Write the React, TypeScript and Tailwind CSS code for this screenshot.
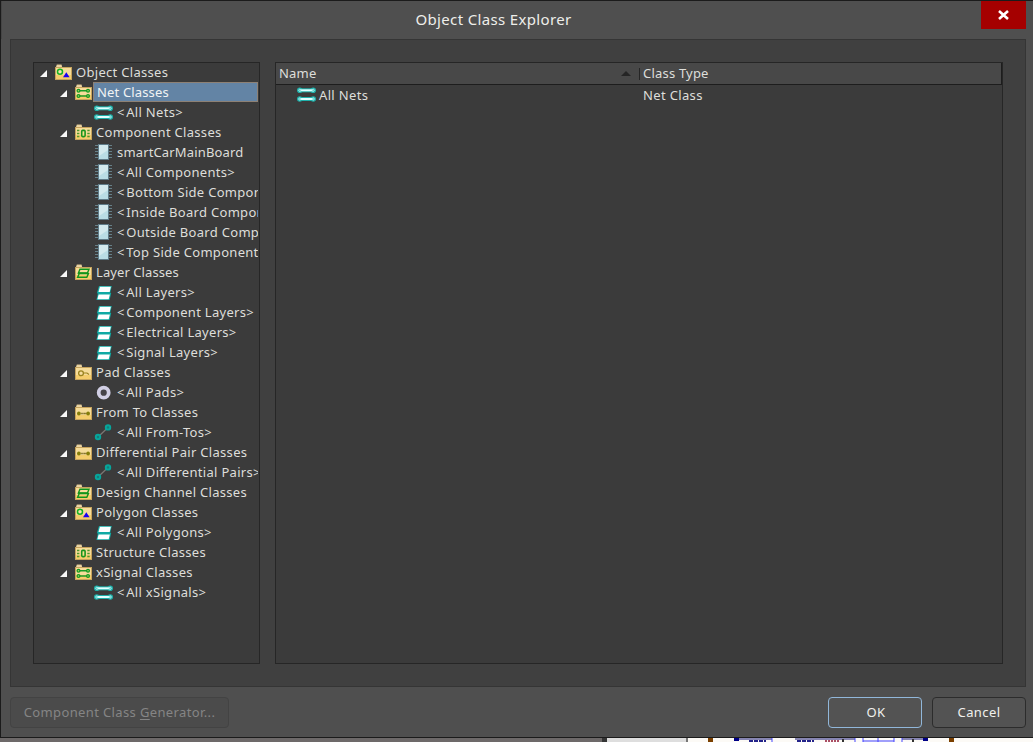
import type { ReactNode } from 'react';

type IconName = 'polygonFolder' | 'netFolder' | 'componentFolder' | 'layerFolder' | 'padFolder' | 'fromToFolder' | 'net' | 'component' | 'layer' | 'pad' | 'fromTo';

function Folder({ children }: { children: ReactNode }) {
  return (
    <>
      <path d="M1 15.5V3.5H2L2.8 0.5H7.5L8.3 3.5H17V15.5Z" fill="#d9c18d" />
      <path d="M2 3.5L3 1.2H7.3L8 3.5Z" fill="#ecd6a6" />
      <rect x="1.5" y="3.5" width="16" height="12" fill="#f6dc9a" stroke="#c6a35c" />
      <path d="M2 11H17V15H2Z" fill="#f5cd6c" />
      {children}
    </>
  );
}

function NetLine({ y }: { y: number }) {
  return (
    <>
      <rect x="2" y={y - 2} width="15" height="4" fill="#1fb0aa" />
      <circle cx="2.8" cy={y} r="2.8" fill="#1fb0aa" />
      <circle cx="16.2" cy={y} r="2.8" fill="#1fb0aa" />
      <path d={`M3 ${y}H16`} stroke="#e2ffff" strokeWidth="2" />
      <circle cx="2.8" cy={y} r="1.1" fill="#3bbdb8" stroke="#b4f2f0" strokeWidth="0.9" />
      <circle cx="16.2" cy={y} r="1.1" fill="#3bbdb8" stroke="#b4f2f0" strokeWidth="0.9" />
    </>
  );
}

function Icon({ name }: { name: IconName }) {
  return (
    <svg className="h-[18px] w-[19px] shrink-0" viewBox="0 0 19 18">
      {name === 'polygonFolder' && (
        <Folder>
          <circle cx="6" cy="7.7" r="2.5" fill="#f6e4ac" stroke="#16b321" strokeWidth="1.5" />
          <path d="M9 13.3L12.3 8.3L15.6 13.3Z" fill="#1b00f2" />
        </Folder>
      )}
      {name === 'netFolder' && (
        <Folder>
          <path d="M5 6.7H14M5 12H14" stroke="#1c9c27" strokeWidth="1.6" />
          <g fill="#b9cf60" stroke="#149b21" strokeWidth="1.3">
            <circle cx="4.5" cy="6.7" r="1.4" /><circle cx="14" cy="6.7" r="1.4" />
            <circle cx="4.5" cy="12" r="1.4" /><circle cx="14" cy="12" r="1.4" />
          </g>
        </Folder>
      )}
      {name === 'componentFolder' && (
        <Folder>
          <rect x="7.7" y="6.4" width="3.4" height="6.2" rx="1" fill="#f4de8a" stroke="#18951e" strokeWidth="1.6" />
          <path d="M3 6.5H5.4M3 9.5H5.4M3 12.5H5.4M13.3 6.5H15.7M13.3 9.5H15.7M13.3 12.5H15.7" stroke="#50972b" strokeWidth="1.3" />
        </Folder>
      )}
      {name === 'layerFolder' && (
        <Folder>
          <path d="M6 5.3H15L13.4 9H4.4ZM5.2 9.6H14.4L12.8 13.2H3.6Z" fill="none" stroke="#11951b" strokeWidth="1.4" />
          <path d="M4.4 9.3H14.5" stroke="#11951b" strokeWidth="1.5" />
        </Folder>
      )}
      {name === 'padFolder' && (
        <Folder>
          <circle cx="7" cy="9.3" r="2.4" fill="#f6dda0" stroke="#9b831f" strokeWidth="1.3" />
          <path d="M9.7 9H13L15 10.4" fill="none" stroke="#9b831f" strokeWidth="1.2" />
        </Folder>
      )}
      {name === 'fromToFolder' && (
        <Folder>
          <circle cx="4.9" cy="9.5" r="1.9" fill="#857e09" />
          <circle cx="14.1" cy="9.5" r="1.9" fill="#857e09" />
          <path d="M7.4 9.5H8.6M9.5 9.5H10.7M11.4 9.5H12.2" stroke="#554700" strokeWidth="1.4" />
        </Folder>
      )}
      {name === 'net' && <><NetLine y={4.3} /><NetLine y={13} /></>}
      {name === 'component' && (
        <>
          <path d="M1 1.5H18M1 4.5H18M1 7.5H18M1 10.5H18M1 13.5H18" stroke="#668088" />
          <rect x="4.5" y="0.5" width="10" height="15" fill="#b9dde5" stroke="#5f7c89" />
          <path d="M5 1H14V6L5 12Z" fill="#d3eaee" />
        </>
      )}
      {name === 'layer' && (
        <>
          <path d="M5 2H17.8L16.2 8.8L17.2 9L15.6 16H2.4L3.9 9.5L2.8 9.2Z" fill="#10aaa4" />
          <path d="M5.9 2.7H16.9L15.7 8H4.5Z" fill="white" />
          <path d="M4.6 10.5H15.9L14.7 15.3H3.4Z" fill="white" />
        </>
      )}
      {name === 'pad' && <circle cx="9.7" cy="8.7" r="5" fill="#454348" stroke="#d1cfe4" strokeWidth="3.8" />}
      {name === 'fromTo' && (
        <>
          <path d="M4 13L14 3.5" stroke="#7b7976" strokeWidth="1.2" />
          <circle cx="4" cy="13" r="2.2" fill="#177b76" stroke="#06a59b" strokeWidth="2" />
          <circle cx="14" cy="3.4" r="2.2" fill="#177b76" stroke="#06a59b" strokeWidth="2" />
        </>
      )}
    </svg>
  );
}

type Item = { level: 0 | 1 | 2; icon: IconName; label: string; open?: boolean; selected?: boolean; tracking?: string };

const items: Item[] = [
  { level: 0, icon: 'polygonFolder', label: 'Object Classes', open: true },
  { level: 1, icon: 'netFolder', label: 'Net Classes', open: true, selected: true, tracking: 'tracking-[0.15px]' },
  { level: 2, icon: 'net', label: '<All Nets>' },
  { level: 1, icon: 'componentFolder', label: 'Component Classes', open: true },
  { level: 2, icon: 'component', label: 'smartCarMainBoard', tracking: 'tracking-[0.15px]' },
  { level: 2, icon: 'component', label: '<All Components>' },
  { level: 2, icon: 'component', label: '<Bottom Side Components>' },
  { level: 2, icon: 'component', label: '<Inside Board Components>' },
  { level: 2, icon: 'component', label: '<Outside Board Components>' },
  { level: 2, icon: 'component', label: '<Top Side Components>' },
  { level: 1, icon: 'layerFolder', label: 'Layer Classes', open: true, tracking: 'tracking-[0.08px]' },
  { level: 2, icon: 'layer', label: '<All Layers>' },
  { level: 2, icon: 'layer', label: '<Component Layers>' },
  { level: 2, icon: 'layer', label: '<Electrical Layers>' },
  { level: 2, icon: 'layer', label: '<Signal Layers>' },
  { level: 1, icon: 'padFolder', label: 'Pad Classes', open: true },
  { level: 2, icon: 'pad', label: '<All Pads>' },
  { level: 1, icon: 'fromToFolder', label: 'From To Classes', open: true },
  { level: 2, icon: 'fromTo', label: '<All From-Tos>' },
  { level: 1, icon: 'fromToFolder', label: 'Differential Pair Classes', open: true },
  { level: 2, icon: 'fromTo', label: '<All Differential Pairs>' },
  { level: 1, icon: 'layerFolder', label: 'Design Channel Classes' },
  { level: 1, icon: 'polygonFolder', label: 'Polygon Classes', open: true },
  { level: 2, icon: 'layer', label: '<All Polygons>' },
  { level: 1, icon: 'componentFolder', label: 'Structure Classes' },
  { level: 1, icon: 'netFolder', label: 'xSignal Classes', open: true },
  { level: 2, icon: 'net', label: '<All xSignals>' },
];

const indents = ['pl-[6px]', 'pl-[26px]', 'pl-[46px]'];

function Label({ text }: { text: string }) {
  if (!text.startsWith('<')) return <>{text}</>;
  return (
    <>
      <span className="mr-[1.5px]">&lt;</span>
      {text.slice(1)}
    </>
  );
}

function TreeRow({ item }: { item: Item }) {
  return (
    <div className={`flex h-5 items-center ${indents[item.level]}`}>
      <span className="flex w-[14px] shrink-0">
        {item.open && <svg className="mt-[2px] h-[7px] w-[7px]" viewBox="0 0 7 7"><path d="M7 0V7H0Z" fill="#f7f7f7" /></svg>}
      </span>
      <span className="flex shrink-0 pt-[2px]"><Icon name={item.icon} /></span>
      <span className={`flex h-5 min-w-0 flex-1 items-center overflow-hidden whitespace-pre ${item.tracking ?? 'tracking-[0.3px]'} ${item.level === 2 ? 'pl-[4px]' : 'pl-[3px]'} ${item.selected ? 'border border-[#8d8175] bg-[#6384a5] pl-[2px] text-[#f1f3f4]' : ''}`}><Label text={item.label} /></span>
    </div>
  );
}

export default function App() {
  return (
    <div className="flex h-[742px] w-[1033px] flex-col overflow-hidden bg-[#6d6969] font-['Noto_Sans',sans-serif] text-[13px] leading-5 text-[#dededa]">
      <main className="flex h-[738px] shrink-0 flex-col border-y border-l border-[#1b1b1b] bg-[#4f4f4f] pr-[7px] pl-[9px]">
        <header className="-mr-[7px] -ml-[9px] flex h-[38px] shrink-0 items-start border-l border-[#454545]">
          <h1 className="flex h-[36px] flex-1 items-center justify-center pl-[4px] text-[15px] tracking-[0.35px] text-[#eeeeea]">Object Class Explorer</h1>
          <button aria-label="Close" className="mr-[7px] flex h-7 w-[45px] items-center justify-center bg-[#a50000]">
            <svg className="h-[10px] w-[11px]" viewBox="0 0 11 10"><path d="M1 1L10 9M10 1L1 9" stroke="white" strokeWidth="2.6" /></svg>
          </button>
        </header>

        <section className="flex h-[648px] w-[1016px] shrink-0 gap-[15px] border border-[#353535] bg-[#404040] px-[22px] pt-[22px]">
          <nav className="h-[602px] w-[227px] shrink-0 overflow-hidden border border-[#262626] bg-[#3b3b3b] pr-px">
            <div className="-mt-px">
              {items.map((item) => <TreeRow key={item.label} item={item} />)}
            </div>
          </nav>
          <div className="h-[602px] w-[728px] shrink-0 border border-[#262626] bg-[#3b3b3b] tracking-[0.2px]">
            <div className="flex h-[22px] items-center border-r border-b border-[#1d1d1d] bg-[#484848]">
              <span className="flex-1 pb-px pl-[3px]">Name</span>
              <svg className="mr-2 h-[5px] w-[10px]" viewBox="0 0 10 5"><path d="M0 5L5 0L10 5Z" fill="#252525" /></svg>
              <span className="h-3 w-px bg-[#252525]" />
              <span className="w-[361px] pb-px pl-[3px]">Class Type</span>
            </div>
            <div className="flex h-5 items-center pl-[21px]">
              <Icon name="net" />
              <span className="w-[327px] pl-[3px] tracking-[0.35px]">All Nets</span>
              <span className="tracking-[0.35px]">Net Class</span>
            </div>
          </div>
        </section>

        <footer className="flex h-[50px] items-center gap-[10px]">
          <button className="h-[31px] w-[219px] rounded-[4px] border border-[#434343] bg-[#4b4b4b] tracking-[0.37px] text-[#858585]">Component Class <span className="underline underline-offset-2">G</span>enerator...</button>
          <button className="ml-auto h-[31px] w-[94px] rounded-[4px] border border-[#91b7da] bg-[#535353] pl-[2px] tracking-[0.4px] text-[#f0f0ed]">OK</button>
          <button className="h-[31px] w-[94px] rounded-[4px] border border-[#2c2c2c] bg-[#535353] tracking-[0.4px] text-[#f0f0ed]">Cancel</button>
        </footer>
      </main>
      <svg className="h-1 w-full shrink-0" viewBox="0 0 1033 4">
        <path d="M0 0H602V4H0Z" fill="#6d6969" />
        <path d="M602 0H607V4H602Z" fill="#353535" />
        <path d="M607 0H686V4H607Z" fill="#dedede" />
        <path d="M686 0H688V4H686Z" fill="#777" />
        <path d="M688 0H1033V4H688Z" fill="#fcfaf6" />
        <path d="M708 0H713V4H708ZM949 0H954V4H949Z" fill="#7b4000" />
        <path d="M736 1H772M795 1H855M902 1H928" stroke="#11116c" />
        <path d="M772 0V4M855 0V4M863 0V4M878 0V4M894 0V4M902 0V4M863 3H894" stroke="#4444ff" />
        <path d="M734 0H739V3H734ZM923 0H928V3H923Z" fill="#000087" />
        <path d="M749 3H766M797 3H814" stroke="#24248a" strokeWidth="2" strokeDasharray="4 1" />
        <path d="M825 3H840" stroke="#ab4f65" strokeWidth="2" strokeDasharray="2 1" />
        <path d="M843 1V4M913 1V4" stroke="#333" strokeWidth="2" />
      </svg>
    </div>
  );
}
